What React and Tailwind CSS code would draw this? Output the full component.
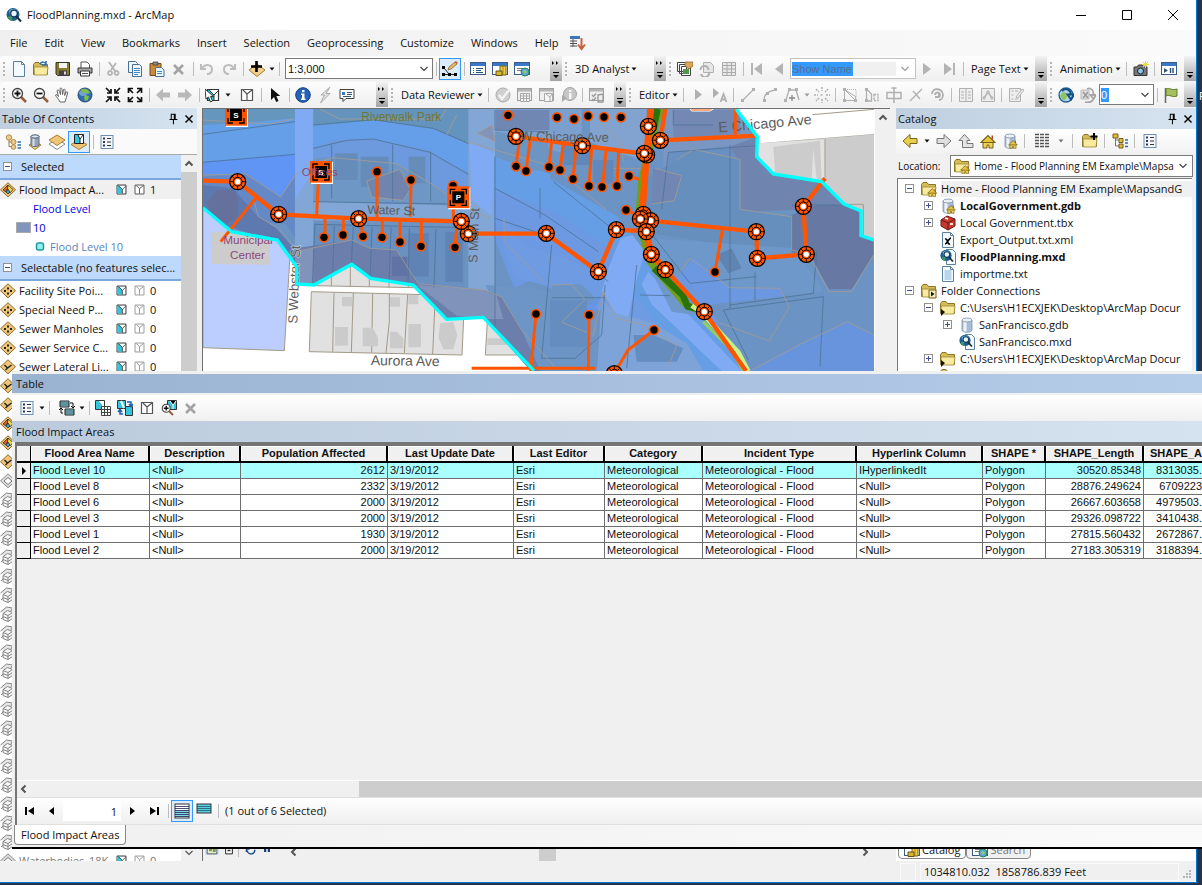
import React from 'react';
import clsx from 'clsx';

const FLOOD_ROWS = [
    { name: 'Flood Level 10', desc: '<Null>', pop: '2612', link: 'IHyperlinkedIt', length: '30520.85348', area: '8313035.', selected: true },
    { name: 'Flood Level 8', desc: '<Null>', pop: '2332', link: '<Null>', length: '28876.249624', area: '6709223' },
    { name: 'Flood Level 6', desc: '<Null>', pop: '2000', link: '<Null>', length: '26667.603658', area: '4979503.' },
    { name: 'Flood Level 3', desc: '<Null>', pop: '2000', link: '<Null>', length: '29326.098722', area: '3410438.' },
    { name: 'Flood Level 1', desc: '<Null>', pop: '1930', link: '<Null>', length: '27815.560432', area: '2672867.' },
    { name: 'Flood Level 2', desc: '<Null>', pop: '2000', link: '<Null>', length: '27183.305319', area: '3188394.' },
];

const LAYERS = [
    { icon: 'points', name: 'Facility Site Poi...' },
    { icon: 'points', name: 'Special Need P...' },
    { icon: 'points', name: 'Sewer Manholes' },
    { icon: 'points', name: 'Sewer Service C...' },
    { icon: 'lines', name: 'Sewer Lateral Li...' },
    { icon: 'lines' }, { icon: 'lines' }, { icon: 'polys' }, { icon: 'polys' }, { icon: 'lines' }, { icon: 'greyDiamond' },
    ...Array.from({ length: 19 }, () => ({ icon: 'greyStack' })),
    { icon: 'greyDiamond', name: 'Waterbodies_18K', dim: true },
];

const TREE = [
    { depth: 0, toggle: '-', icon: 'folderHome', name: 'Home - Flood Planning EM Example\\MapsandG', active: true },
    { depth: 1, toggle: '+', icon: 'gdbHome', name: 'LocalGovernment.gdb', bold: true },
    { depth: 1, toggle: '+', icon: 'toolbox', name: 'Local Government.tbx' },
    { depth: 1, icon: 'xml', name: 'Export_Output.txt.xml' },
    { depth: 1, icon: 'mxd', name: 'FloodPlanning.mxd', bold: true },
    { depth: 1, icon: 'txt', name: 'importme.txt' },
    { depth: 0, toggle: '-', icon: 'folderConn', name: 'Folder Connections' },
    { depth: 1, toggle: '-', icon: 'folderLink', name: 'C:\\Users\\H1ECXJEK\\Desktop\\ArcMap Docur' },
    { depth: 2, toggle: '+', icon: 'gdb', name: 'SanFrancisco.gdb' },
    { depth: 2, icon: 'mxd', name: 'SanFrancisco.mxd' },
    { depth: 1, toggle: '+', icon: 'folderLink', name: 'C:\\Users\\H1ECXJEK\\Desktop\\ArcMap Docur' },
    { depth: 1, toggle: '+', icon: 'folderLink', name: '' },
];

const INDENT = ['pl-[7px]', 'pl-[26px]', 'pl-[45px]'];

/* ---------- icon parts ---------- */

const page = (
    <>
        <path d="M2.500 .5h8l3 3v12h-11z" fill="#f4f9fd" stroke="#5d7f9e" />
        <path d="M10.500 .5v3h3" fill="none" stroke="#5d7f9e" />
    </>
);
const folder = (
    <>
        <path d="M.5 3.500l1.500-2h4l1.500 2h7v10h-14z" fill="#d6bc56" stroke="#8a7528" />
        <path d="M1 6h14l-1 8h-12.500z" fill="#f8ea9e" stroke="#9c8636" strokeWidth=".8" />
    </>
);
const house = (
    <>
        <path d="M3 9v6h4v-3h2v3h4v-6" fill="#f0d354" stroke="#75601a" />
        <path d="M1 9.500l7-7 7 7z" fill="#e8c63c" stroke="#75601a" strokeWidth="1.200" />
        <path d="M11.500 2.500h1.500v4h-1.500z" fill="#b5452e" />
    </>
);
const cylinder = (
    <>
        <path d="M3 3v10c0 3 10 3 10 0v-10z" fill="#a9bdd4" />
        <path d="M4.500 4v10.500c1 .6 2 .7 3 .7v-11z" fill="#eef3f9" />
        <ellipse cx="8" cy="3" rx="5" ry="2" fill="#eaf0f6" stroke="#7d90a6" strokeWidth=".8" />
        <path d="M3 3v10c0 3 10 3 10 0v-10" fill="none" stroke="#7d90a6" strokeWidth=".8" />
    </>
);
const globe = (
    <>
        <circle cx="8" cy="8" r="7" fill="#2f6db0" />
        <circle cx="6" cy="5" r="4" fill="#9cc8ec" opacity=".6" />
        <path d="M5 2c4-1 7 1 8 4l-3 1-2-2-3 1zM8 8l4 1-1 4-3 1-1-3z" fill="#7fbf4a" />
        <circle cx="8" cy="8" r="7" fill="none" stroke="#274c7a" />
    </>
);
const winFrame = (
    <>
        <rect x=".5" y="1.500" width="15" height="12" fill="#fff" stroke="#3b5a86" />
        <path d="M1 2h14v3h-14z" fill="#3b78c8" />
    </>
);
const greyWin = (
    <>
        <rect x=".5" y="1.500" width="14" height="12" fill="#eee" stroke="#a0a0a0" />
        <path d="M1 2h13v2.500h-13z" fill="#b4b4b4" />
    </>
);
const lens = (
    <>
        <path d="M10 10l5 5" stroke="#9a5a3c" strokeWidth="2.500" />
        <circle cx="6.500" cy="6.500" r="5" fill="#fff" stroke="#444" strokeWidth="1.300" />
    </>
);
const mapSheet = <path d="M2.500 2.500h11v11h-11zM4 3l4 4v6M8 7l5-4" fill="#fff" stroke="#555" strokeWidth="1.200" />;
const cyanSheet = (
    <>
        <path d="M2.500 2.500h11v11h-11z" fill="#fff" stroke="#333" strokeWidth="1.200" />
        <path d="M3 3h2l4 5v5h-6z" fill="#34c4dc" />
        <path d="M4 3l5 5v5M9 8l4-4" fill="none" stroke="#333" />
    </>
);
const arcGlobe = (
    <>
        <circle cx="7" cy="7.500" r="6.500" fill="#1d5d8f" />
        <path d="M3 4c3-3 7-2 9 0l-2 4-5 3z" fill="#6fb6d8" />
        <path d="M2 9l3 1 2 4c-3 0-5-2-5-5z" fill="#3f9a54" />
        <circle cx="8" cy="6.500" r="3.300" fill="#e8f3f8" stroke="#12395a" strokeWidth="1.300" />
        <path d="M10.500 9.500l4.500 5" stroke="#1d2f40" strokeWidth="2" />
    </>
);
const list = (
    <>
        <rect x="2" y="1.500" width="12" height="13" fill="#f4f8fc" stroke="#6f8fb0" />
        <path d="M8 4.500h4M8 8h4M8 11.500h4" stroke="#333" />
        <g fill="#335"><path d="M4 3.500h2v2h-2zM4 7h2v2h-2zM4 10.500h2v2h-2z" /></g>
    </>
);
const diamond = <path d="M8 .8l7.500 7-7.500 7-7.500-7z" fill="#efc678" stroke="#8f6a2a" />;
const arrowR = 'M1 5.500h7v-4l7 6.500-7 6.500v-4h-7z';

const ICONS = {
    arcmap: arcGlobe,
    newDoc: page,
    open: <>{folder}<path d="M7 3c2-3 5-2 6 0M13 0v4h-4" fill="none" stroke="#2e6eb5" strokeWidth="1.500" /></>,
    save: (
        <>
            <path d="M1 1.500h13.500v13h-12l-1.500-1.500z" fill="#8a7a2e" stroke="#333" />
            <path d="M4 2h8v5h-8z" fill="#f3f3f3" /><path d="M4 9.500h8v5h-8z" fill="#444" /><path d="M9 10.500h2v3h-2z" fill="#ddd" />
        </>
    ),
    print: (
        <>
            <path d="M4 7v-6h6l2.500 2.500v3.500" fill="#fff" stroke="#555" />
            <path d="M1 7h14v5h-14z" fill="#a8a8a8" stroke="#333" /><path d="M3.500 10h9v5h-9z" fill="#fff" stroke="#333" /><path d="M5 12.500h6" stroke="#555" />
        </>
    ),
    cut: <path d="M4 1l6 9M11 2l-5 7M5 10a2 2 0 1 0 .1 0M11.500 10a2 2 0 1 0 .1 0" fill="none" stroke="#b5b5b5" strokeWidth="1.800" />,
    copy: (
        <g fill="#eef5fb" stroke="#4a6f94">
            <path d="M1.500 .5h7l2 2v9h-9z" /><path d="M5.500 3.500h7l2 2v10h-9z" /><path d="M7 7.500h6M7 9.500h6M7 11.500h6M7 13.500h4" stroke="#3b8bd0" />
        </g>
    ),
    paste: (
        <>
            <path d="M1 2.500h11v12h-11z" fill="#c98b3a" stroke="#6e4a1c" /><path d="M4 1h5v3h-5z" fill="#888" stroke="#444" strokeWidth=".8" />
            <path d="M6.500 6.500h6l2.500 2.500v6.500h-8.500z" fill="#eef5fb" stroke="#4a6f94" /><path d="M8 10.500h5M8 12.500h5" stroke="#3b8bd0" />
        </>
    ),
    del: <path d="M3 4l9 9M12 4l-9 9" stroke="#a3a3a3" strokeWidth="2.600" />,
    undo: <path d="M2 3v5h5M3 7c4-5 10-3 10 1 0 3-2 5-5 5" fill="none" stroke="#bdbdbd" strokeWidth="2" />,
    redo: <path d="M14 3v5h-5M13 7c-4-5-10-3-10 1 0 3 2 5 5 5" fill="none" stroke="#bdbdbd" strokeWidth="2" />,
    addData: (
        <>
            <path d="M8 3l8 6-8 6.500-8-6.500z" fill="#f0cf8c" stroke="#a87d2f" /><path d="M7.500 0v11M2 5.500h11" stroke="#000" strokeWidth="2.600" />
        </>
    ),
    sketch: (
        <>
            <path d="M2 13.500h12M2 7l5 6" stroke="#222" /><path d="M0 12h3v3h-3zM6 12h3v3h-3zM12 12h3v3h-3zM0 5h3v3h-3z" fill="#000" />
            <path d="M6 9l1-3 6-5 2 2-6 5z" fill="#e8b862" stroke="#7d5a20" strokeWidth=".7" /><path d="M12.500 1l1.500-1 2 2-1.500 1z" fill="#d0524a" />
        </>
    ),
    tocWin: <>{winFrame}<path d="M3 7.500h1M3 9.500h1M3 11.500h1" stroke="#d23" /><path d="M6 7.500h7M6 9.500h5M6 11.500h7" stroke="#257" /></>,
    catWin: <>{winFrame}<path d="M8 5h6v9h-6z" fill="#f0d040" stroke="#75601a" /><path d="M11 5v9" stroke="#a08424" /><path d="M4 10h6v4.500h-6z" fill="#d8b52c" stroke="#65521a" /></>,
    searchWin: <>{winFrame}<path d="M3 7.500h8M3 9.500h4" stroke="#777" /><circle cx="11" cy="11" r="4" fill="#5fa3d9" stroke="#285" /><path d="M9 10l2-1 2 2-2 2z" fill="#8fd060" /></>,
    menuArrow: (
        <>
            <path d="M0 1h10v3h-10z" fill="#3b78b8" /><path d="M0 6h7M0 8.500h7M0 11h7M3 4v8" stroke="#555" /><path d="M11.500 3v10M8 9.500l3.500 4.500 3.500-4.500" fill="none" stroke="#c8623c" strokeWidth="2" />
        </>
    ),
    ddp: (
        <>
            <path d="M.5 1.500h9v9h-9zM2.500 3.500h9v9h-9zM4.500 5.500h9v9h-9z" fill="#fff" stroke="#444" /><path d="M6 8h6v5h-6z" fill="#4f9a4a" /><path d="M8 1h8v4l-4 3-4-3z" fill="#d9a65a" stroke="#8a5a20" strokeWidth=".7" />
        </>
    ),
    ddpRefresh: (
        <g fill="#e6e6e6" stroke="#b0b0b0"><path d="M4.500 1.500h7l3 3v7h-10z" /><path d="M1.500 9a4 4 0 0 1 8 0M10 11a4 4 0 0 1-8 2" fill="none" strokeWidth="2" /></g>
    ),
    greyTable: <g fill="#e9e9e9" stroke="#aaa"><path d="M1.500 1.500h13v13h-13z" /><path d="M1.500 4.500h13M1.500 8h13M1.500 11.500h13M6 1.500v13M10.500 1.500v13" /></g>,
    first: <path d="M2 2h2v12h-2zM13 2v12l-8-6z" fill="#b4b4b4" />,
    prev: <path d="M12 2v12l-8-6z" fill="#b4b4b4" />,
    next: <path d="M4 2v12l8-6z" fill="#b4b4b4" />,
    last: <path d="M12 2h2v12h-2zM3 2v12l8-6z" fill="#b4b4b4" />,
    camera: (
        <>
            <path d="M1 6h3l1.500-2h4l1.500 2h3v8.500h-13z" fill="#777" stroke="#333" /><circle cx="7.500" cy="10" r="3" fill="#8fc4ea" stroke="#222" />
            <path d="M12.500 0v7M9 3.500h7M10 1l5 5M15 1l-5 5" stroke="#e9d94b" />
        </>
    ),
    animWin: <>{winFrame}<path d="M3 7l4 2.500-4 2.500z" fill="#357" /><path d="M9.500 7v5M12 7v5" stroke="#357" strokeWidth="1.500" /></>,
    zoomIn: <>{lens}<path d="M6.500 3.500v6M3.500 6.500h6" stroke="#111" strokeWidth="1.800" /></>,
    zoomOut: <>{lens}<path d="M3.500 6.500h6" stroke="#111" strokeWidth="1.800" /></>,
    pan: <path d="M5 15c-1-3-4-5-4.500-7 1-1 2 0 3 1.500l-1.500-6c1-1 2 0 2.500 1l1 3-.5-6c1-1 2 0 2 1l.6 5 .9-5c1-.8 1.800 0 1.700 1l-.5 5 1.600-3.500c1-.5 1.600.2 1.300 1-1 3-1.500 6-2.600 9z" fill="#fff" stroke="#555" strokeWidth=".9" />,
    globe,
    fixedIn: <path d="M1 1l5 5M6 2v4h-4M15 1l-5 5M10 2v4h4M1 15l5-5M6 14v-4h-4M15 15l-5-5M10 14v-4h4" fill="none" stroke="#111" strokeWidth="1.700" />,
    fixedOut: <path d="M2 2l4 4M1.500 6v-4.500h4.500M14 2l-4 4M14.500 6v-4.500h-4.500M2 14l4-4M1.500 10v4.500h4.500M14 14l-4-4M14.500 10v4.500h-4.500" fill="none" stroke="#111" strokeWidth="1.700" />,
    backGrey: <path d={arrowR} fill="#b9b9b9" transform="matrix(-1 0 0 1 16 0)" />,
    fwdGrey: <path d={arrowR} fill="#b9b9b9" />,
    selectFeat: <>{cyanSheet}<path d="M0 2l1 10 2.500-2 2 5 2-1-2-4.500h3z" fill="#fff" stroke="#222" strokeWidth=".9" /></>,
    clearSel: mapSheet,
    pointer: <path d="M4 1v12l3-3 2.200 5 2.300-1-2.200-5h4z" fill="#111" />,
    info: (
        <>
            <circle cx="8" cy="8" r="7.300" fill="#2563b8" stroke="#173f7c" /><path d="M7 3h2.500v2.200h-2.500zM6 6.500h3.500v5h1v1.500h-4.500v-1.500h1v-3.500h-1z" fill="#fff" />
        </>
    ),
    bolt: <path d="M13 0l-9 8h3.500l-4 8 9.500-9.500h-4z" fill="#e2e2e2" stroke="#aaa" />,
    popup: (
        <>
            <path d="M1 2.500h14v9h-8l-3 3v-3h-3z" fill="#fff" stroke="#444" /><path d="M3 5h3v3h-3z" fill="#3b78c8" /><path d="M8 5.500h5M8 7.500h5M4 9.500h8" stroke="#357" />
        </>
    ),
    checkDisc: <><circle cx="8" cy="8" r="7" fill="#cfcfcf" stroke="#aaa" /><path d="M4 8l3 4 7-9" fill="none" stroke="#f4f4f4" strokeWidth="2.200" /></>,
    winTable: <>{greyWin}<path d="M3.500 6.500h9v8h-9zM3.500 9h9M3.500 11.500h9M6.500 6.500v8M9.500 6.500v8" fill="#f5f5f5" stroke="#aaa" /></>,
    winSel: <>{greyWin}<path d="M5.500 6.500h8v8h-8zM7 7l4 3v4M11 10l2-3" fill="#f5f5f5" stroke="#aaa" /></>,
    infoDisc: <><circle cx="9" cy="7" r="6.500" fill="#c6c6c6" stroke="#a5a5a5" /><path d="M8 3h2.500v2h-2.500zM8 6h2.500v6h-2.500z" fill="#f5f5f5" /><path d="M1 8l5 3-5 4z" fill="#aaa" /></>,
    winCheck: <>{greyWin}<path d="M3 8l1.500 1.500 2.500-3M3 12l1.500 1.500 2.500-3M9 8l5-1v8h-5z" fill="none" stroke="#999" strokeWidth="1.300" /></>,
    editArrow: <path d="M5 2v11l7-5.500z" fill="#b0b0b0" />,
    editNote: <><path d="M1 1v10l6-5z" fill="#b0b0b0" /><path d="M8.500 15l3-8 3 8M9.500 12.500h4" fill="none" stroke="#b0b0b0" strokeWidth="1.800" /></>,
    seg: <><path d="M3 13l10-10" stroke="#b0b0b0" strokeWidth="1.300" /><path d="M1 12h3v3h-3zM12 1h3v3h-3z" fill="#b0b0b0" /></>,
    arc: <><path d="M2 13c0-6 5-9 11-10" fill="none" stroke="#b0b0b0" strokeWidth="1.300" /><path d="M1 12h3v3h-3zM12 1h3v3h-3zM4 5h3v3h-3z" fill="#b0b0b0" /></>,
    trace: <><path d="M2 13l3-10h7l3 10" fill="none" stroke="#b0b0b0" strokeWidth="1.300" /><path d="M4 1h3v3h-3zM11 1h3v3h-3zM0 12h3v3h-3z" fill="#b0b0b0" /><path d="M8 8v6M5 11h6" stroke="#888" strokeWidth="1.300" /></>,
    burst: <path d="M8 0v4M8 12v4M0 8h4M12 8h4M2 2l3 3M11 11l3 3M14 2l-3 3M5 11l-3 3M6.500 8h3" stroke="#b0b0b0" strokeWidth="1.500" strokeDasharray="2 1" />,
    vertices: <><path d="M2.500 2.500v11h11zM2.500 2.500l11 7v4" fill="none" stroke="#b0b0b0" /><path d="M1 1h3v3h-3zM1 12h3v3h-3zM12 12h3v3h-3z" fill="#b0b0b0" /><path d="M5 2.500h9v8" fill="none" stroke="#b0b0b0" strokeDasharray="1 1" /></>,
    reshape: <><path d="M2.500 1v14M2.500 2l5 5v7h-5" fill="none" stroke="#b0b0b0" strokeWidth="1.300" /><path d="M1 1h3v3h-3zM1 12h3v3h-3z" fill="#b0b0b0" /><path d="M10 7.500h4v6h-4z" fill="none" stroke="#b0b0b0" strokeWidth="1.500" strokeDasharray="2 1" /></>,
    cutPoly: <path d="M1 5.500h14v6h-14zM8 1v15M5.500 1h5" fill="none" stroke="#b0b0b0" strokeWidth="1.500" />,
    split: <path d="M2 14l12-12M5 4l7 8" stroke="#b0b0b0" strokeWidth="1.300" />,
    rotate: <path d="M2 7c0-7 11-6 11 1 0 3-2 5-4 5M5 8a2.500 2.500 0 1 1 4 2M9 5v5h-4" fill="none" stroke="#b0b0b0" strokeWidth="1.800" />,
    attrs: <g fill="#eee" stroke="#b0b0b0"><path d="M1.500 1.500h13v13h-13zM8 1.500v13M3 5h3M3 8h3M3 11h3M10 5h3M10 8h3M10 11h3" /></g>,
    sketchProps: <g fill="#eee" stroke="#b0b0b0"><path d="M1.500 1.500h13v13h-13z" /><path d="M4 11l4-6 4 6" strokeWidth="1.500" /><path d="M3 10h2v2h-2zM7 4h2v2h-2zM11 10h2v2h-2z" /></g>,
    createFeat: <g fill="#eee" stroke="#b0b0b0"><path d="M1.500 1.500h11v13h-11zM3.500 4h2M3.500 8h2M3.500 12h2M7 4h3M7 12h3" /><path d="M8 10l6-8 2 1-6 8z" /></g>,
    globeSync: <><circle cx="8" cy="8" r="7" fill="#a9d3ee" stroke="#1f5f90" strokeWidth="1.300" /><path d="M2 9l3-4 3 1 1 4-3 4z" fill="#8fc45a" /><path d="M4 4c4-4 9-1 9 4M9.500 7.500l3.500 5 3-5z" fill="none" stroke="#174f80" strokeWidth="2" /></>,
    globeSyncGrey: <><path d="M1 3h8v9h-8z" fill="#ddd" stroke="#bbb" /><path d="M3 5l5 6M8 5l-5 6" stroke="#999" strokeWidth="1.500" /><path d="M7 2c4-2 7 2 6.500 6M10.500 8l3 4 2.500-4zM5 15c3 1 6 0 8-2" fill="none" stroke="#a5a5a5" strokeWidth="1.800" /></>,
    flag: <><path d="M2.500 1v15" stroke="#666" strokeWidth="1.500" /><path d="M3 2c4-2 5 2 11 0v7c-5 2-7-2-11 0z" fill="#a4c060" stroke="#5f7a2c" /></>,
    drawOrder: (
        <>
            <path d="M4 4v8.500h4M4 8h4" fill="none" stroke="#9a7a40" /><circle cx="4" cy="3.500" r="2.700" fill="#eecb8c" stroke="#b58b45" /><circle cx="8.500" cy="8" r="2.500" fill="#eecb8c" stroke="#b58b45" />
            <circle cx="8.500" cy="13" r="2.300" fill="#eecb8c" stroke="#b58b45" /><path d="M12.500 8h3.500M12.500 11h3.500M12.500 14h3.500" stroke="#2b6fb8" strokeWidth="1.300" />
        </>
    ),
    bySource: <><path d="M2 11l6-3 6 3-6 4.500z" fill="#f0cf8c" stroke="#a87d2f" /><path d="M4 2v9c0 2 8 2 8 0v-9z" fill="#94a4b8" stroke="#5a6a80" /><path d="M5.500 3.500v8.500h2v-8z" fill="#d5dde6" /><ellipse cx="8" cy="2.500" rx="4" ry="1.700" fill="#dfe6ee" stroke="#4a5a70" /></>,
    byVisible: <><path d="M8 5l8 5-8 5.500-8-5.500z" fill="#fff" stroke="#888" /><path d="M8 1l8 5-8 5.500-8-5.500z" fill="#efc678" stroke="#a87d2f" /></>,
    bySelection: <><path d="M8 6l8 4.500-8 5-8-5z" fill="#efc678" stroke="#a87d2f" /><path d="M3.500 .5h9v9h-9z" fill="#fff" stroke="#222" /><path d="M4 1h3l2 4v4h-5z" fill="#34c4dc" /><path d="M7 1l2 4v4M9 5l3-4" stroke="#222" fill="none" /></>,
    list,
    points: <>{diamond}<path d="M4 7h2v2h-2zM7 4.500h2v2h-2zM10 7h2v2h-2zM7 9.500h2v2h-2z" fill="#222" /></>,
    lines: <>{diamond}<path d="M4.500 6l3 3 4-3M7.500 9l-2 2" fill="none" stroke="#222" strokeWidth="1.400" /></>,
    polys: <>{diamond}<path d="M8 3l5 4.500-3 3.500-3-4z" fill="#f6d23c" stroke="#222" strokeWidth=".7" /><path d="M8 3l-5 5 3 2 1.500-3.500z" fill="#e0602c" stroke="#222" strokeWidth=".7" /><path d="M6 10l2 2 2-2-2-3z" fill="#3b9ad0" stroke="#222" strokeWidth=".7" /></>,
    greyDiamond: <><path d="M8 .8l7.500 7-7.500 7-7.500-7z" fill="#dcdcdc" stroke="#8a8a8a" /><path d="M4 8l4-3.500 4 3.500-4 3.500z" fill="#fff" stroke="#777" /></>,
    greyStack: (
        <g fill="#f6f6f6" stroke="#858585">
            <path d="M.5 6l6-5 6 1-2 4" fill="#e6e6e6" /><path d="M3 7.500l4.500-3 5 2v6l-4.500 3-5-2z" /><path d="M3 7.500l5 2 4.500-3M8 9.500v6M3 10.500l5 2 4.500-3" fill="none" /><path d="M1 13l2-2" fill="none" />
        </g>
    ),
    selOn: cyanSheet,
    selOff: mapSheet,
    selOffGrey: <path d="M2.500 2.500h11v11h-11zM4 3l4 4v6M8 7l5-4" fill="#fff" stroke="#999" strokeWidth="1.200" />,
    cyanCell: <rect x="4.500" y="4" width="7" height="7" rx="2" fill="#8ff0ee" stroke="#1f9aa0" strokeWidth="1.500" />,
    backGold: <path d={arrowR} fill="#e6cf4d" stroke="#75651c" transform="matrix(-1 0 0 1 16 0)" />,
    fwdPlain: <path d={arrowR} fill="#dedede" stroke="#777" />,
    upLevel: <path d="M4.500 12.500v-5h-3.500l5.500-6 5.500 6h-3v3h6v4h-10.500z" fill="#e4e4e4" stroke="#777" />,
    home: house,
    gdbHome: <>{cylinder}<g transform="translate(6 6) scale(.62)">{house}</g></>,
    gdb: cylinder,
    gridView: <path d="M1 1.500h14M1 4.500h14M1 7.500h14M1 10.500h14M1 13.500h14" stroke="#555" strokeWidth="1.400" strokeDasharray="4 1" />,
    folderAdd: <>{folder}<path d="M12 0v7M8.500 3.500h7" stroke="#000" strokeWidth="2" /></>,
    treeView: <><path d="M3.500 4v9h5M3.500 7h5" fill="none" stroke="#777" /><path d="M1 1h5v4h-5zM7 5.500h4v4h-4zM7 11h4v4h-4z" fill="#e2bd3c" stroke="#75601a" /><path d="M13 7h3M13 10h3M13 13.500h3" stroke="#2b6fb8" strokeWidth="1.400" /></>,
    folderHome: <>{folder}<g transform="translate(6 6) scale(.65)">{house}</g></>,
    folderConn: <>{folder}<path d="M8 7h7v8h-7z" fill="#f7efc0" stroke="#75601a" /><path d="M10 8.500l3.500 2.500-3.500 2.500z" fill="#111" /></>,
    folderLink: <>{folder}<path d="M1 9l4 3-4 4z" fill="#111" /></>,
    toolbox: <><path d="M1 5l6-4 8 3v7l-7 4-7-4z" fill="#c63a30" stroke="#6d1712" /><path d="M1 5l7 3 7-4M8 8v7" stroke="#6d1712" fill="none" /><path d="M5 3l3 1" stroke="#fff" strokeWidth="1.500" /><path d="M10 8h3v2h-3z" fill="#f1d9d6" /></>,
    xml: <>{page}<path d="M5 7c3-1 2 6 5 5M11 6c-2 0-4 6-6 6" fill="none" stroke="#000" strokeWidth="1.500" /></>,
    mxd: <><path d="M6.500 .5h6l3 3v12h-9z" fill="#f4f9fd" stroke="#5d7f9e" /><g transform="scale(.86)">{arcGlobe}</g></>,
    txt: <>{page}<path d="M4.500 5h7M4.500 7h7M4.500 9h7M4.500 11h7M4.500 13h7" stroke="#7fb2dc" /></>,
    related: <><path d="M1 1h9v6h-9zM6 9h9v6h-9z" fill="#7fd0de" stroke="#222" /><path d="M1 3h9M1 5h9M6 11h9M6 13h9" stroke="#222" strokeWidth=".7" /><path d="M11 3h3v4M12 6l2 2 2-2M4 13h-2v-4M0 10l2-2 2 2" fill="none" stroke="#111" /></>,
    selAttr: <><path d="M.5 .5h9v9h-9z" fill="#fff" stroke="#333" /><path d="M1 1h3l3 4v4h-6z" fill="#34c4dc" /><path d="M6.500 6.500h9v9h-9zM6.500 9.500h9M6.500 12.500h9M9.500 6.500v9M12.500 6.500v9" fill="#fff" stroke="#444" /></>,
    switchSel: <><path d="M.5 .5h8v8h-8zM8.500 6.500h7v9h-7z" fill="#34c4dc" stroke="#333" /><path d="M4 1l3 7" stroke="#fff" strokeWidth="2" /><path d="M10 2h4v4M12 4l2 2.500 2-2.500M6 14h-3v-4M1 12l2-2.500 2 2.500" fill="none" stroke="#1f5fa8" strokeWidth="1.500" /></>,
    zoomSel: <><path d="M6.500 .5h9v9h-9z" fill="#34c4dc" stroke="#333" /><path d="M9 1l3 4 3-4M12 5v4" stroke="#fff" /><g transform="translate(0 3) scale(.8)">{lens}<path d="M6.500 3.500v6M3.500 6.500h6" stroke="#111" strokeWidth="1.800" /></g></>,
    allRecords: <><rect x="1" y="1" width="14" height="14" fill="#fff" stroke="#333" /><path d="M2 7h12v7h-12z" fill="#7fdbe6" /><path d="M1 3.500h14M1 5.500h14M1 7.500h14M1 9.500h14M1 11.500h14M1 13.500h14" stroke="#225" strokeWidth=".8" /></>,
    selRecords: <><rect x="1" y="1" width="14" height="9" fill="#5ad0e0" stroke="#333" /><path d="M1 3.500h14M1 5.500h14M1 7.500h14" stroke="#256" strokeWidth=".8" /></>,
    navFirst: <path d="M3 4h2v8h-2zM12 4v8l-6-4z" fill="#000" />,
    navPrev: <path d="M10 4v8l-5-4z" fill="#000" />,
    navNext: <path d="M6 4v8l5-4z" fill="#000" />,
    navLast: <path d="M11 4h2v8h-2zM4 4v8l6-4z" fill="#000" />,
    pin: <path d="M6 2.500h4.500v6h-4.500zM4 8.500h9M8.500 9v5M9.500 3v5" fill="none" stroke="#000" strokeWidth="1.200" />,
    close: <path d="M4 4l8 8M12 4l-8 8" stroke="#000" strokeWidth="1.700" />,
    dataView: <><path d="M1.500 1.500h13v13h-13z" fill="#e8eecb" stroke="#333" /><path d="M4 5h4v6h-4zM9 8h4v4h-4z" fill="#7a9a5a" /></>,
    layoutView: <><path d="M3.500 1.500h9v13h-9z" fill="#fff" stroke="#222" strokeWidth="1.300" /><path d="M6 9h4v2h-4z" fill="#333" /></>,
    refresh: <path d="M3 7a5 5 0 0 1 10 0M13 9a5 5 0 0 1-10 1M2 12v-4h4" fill="none" stroke="#1f4a8a" strokeWidth="2" />,
    pause: <path d="M4 3h3v9h-3zM9 3h3v9h-3z" fill="#1f3f7a" />,
};

const Icon = ({ name, className = 'size-4' }) => (
    <svg viewBox="0 0 16 16" className={clsx('block shrink-0', className)} aria-hidden="true">{ICONS[name]}</svg>
);

/* ---------- toolbar pieces ---------- */

const Tool = ({ icon, on }) => (
    <button type="button" aria-label={icon} className={clsx('flex h-[22px] w-[22px] shrink-0 items-center justify-center', on && 'border border-[#3399ff] bg-[#dcebfa]')}>
        <Icon name={icon} />
    </button>
);
const Sep = () => <div className="flex w-1.5 shrink-0 justify-center"><div className="h-3.5 w-px bg-[#bdbdbd]" /></div>;
const Drop = ({ className }) => (
    <svg viewBox="0 0 8 8" className={clsx('block size-2 shrink-0', className)}><path d="M1.500 2.500h5l-2.500 3z" fill="currentColor" /></svg>
);
const Grip = () => <div className="ml-[3px] mr-[3px] h-3.5 w-0.5 shrink-0 border-l-2 border-dotted border-[#b5b5b5]" />;
const More = ({ full = true }) => (
    <div className="ml-auto flex h-full w-3 shrink-0 flex-col items-center justify-between bg-gradient-to-b from-[#f4f4f4] to-[#a4a4a4] pt-1 pb-0.5">
        <svg viewBox="0 0 8 6" className="h-1.5 w-2">{full && <path d="M0 1l2 2-2 2zM4 1l2 2-2 2z" fill="#000" />}</svg>
        <svg viewBox="0 0 8 8" className="size-2"><path d="M1 1h6v1h-6zM1 4h6l-3 3z" fill="#000" /></svg>
    </div>
);
const Bar = ({ className, children }) => (
    <div role="toolbar" className={clsx('flex h-[25px] shrink-0 items-center rounded-sm bg-gradient-to-b from-[#fdfdfd] to-[#efefef]', className)}>{children}</div>
);
const MenuButton = ({ children }) => (
    <button type="button" className="flex shrink-0 items-center gap-px whitespace-nowrap pl-[5px] pr-0.5">{children}<Drop /></button>
);
const CHEVRONS = {
    down: 'M1.500 3l3.500 3.500 3.500-3.500',
    up: 'M1.500 6.500l3.500-3.500 3.500 3.500',
    left: 'M6.500 1.500l-3.500 3.500 3.500 3.500',
    right: 'M3.500 1.500l3.500 3.500-3.500 3.500',
};
const Chevron = ({ dir = 'down', className = 'text-[#555]' }) => (
    <svg viewBox="0 0 10 10" className={clsx('block size-2.5 shrink-0', className)}><path d={CHEVRONS[dir]} fill="none" stroke="currentColor" strokeWidth={dir === 'down' ? 1.2 : 2} /></svg>
);

/* ---------- map ---------- */

const MANHOLES = [
    [113, 230], [236, 328], [476, 341], [805, 386], [784, 349], [948, 94], [1039, 385],
    [1345, 64], [1381, 106], [1340, 150], [1333, 145], [1147, 122], [1195, 500], [1249, 374], [1330, 328], [1352, 347], [1321, 342], [1339, 380],
    [1354, 448], [1396, 494], [1513, 620], [1669, 380], [1672, 460], [1819, 448], [1810, 304], [1243, 806],
];
const DOTS = [
    [531, 200], [633, 225], [759, 242], [372, 397], [429, 390], [489, 394], [546, 397], [600, 411], [663, 424], [765, 427], [924, 31], [948, 184], [978, 198], [1008, 627],
    [1071, 37], [1122, 42], [1164, 33], [1212, 36], [1263, 37], [1047, 186], [1080, 195], [1119, 222], [1167, 243], [1206, 246], [1251, 243], [1287, 213], [1278, 315], [1545, 501], [1167, 630], [1362, 675],
];

const Facility = ({ x, y, letter }) => (
    <g transform={`translate(${x} ${y})`}>
        <path d="M-30 -30h66v66h-66z" fill="#fff" />
        <path d="M-33 -33h66v65h-66z" fill="#ff5500" />
        <path d="M-24 -9v-15h15M24 -9v-15h-15M-24 9v15h15M24 9v15h-15" fill="none" stroke="#000" strokeWidth="4" />
        <path d="M-18 -18h36v36h-36z" fill="#000" />
        <text y="8" textAnchor="middle" fontSize="24" fontWeight="700" fill="#fff">{letter}</text>
    </g>
);

// map units are thirds of a pixel
const FloodMap = () => (
    <svg viewBox="9 12 2013 786" className="block h-[262px] w-[671px] shrink-0" fontFamily="Liberation Sans, Arial, sans-serif" role="img" aria-label="Flood map">
        <path d="M9 12h2013v786h-2013z" fill="#fff" />

        {/* dry parcels under the flood layer */}
        <path d="M9 300h270l-26 437-244-9z" fill="#bccdff" stroke="#a29a88" strokeWidth="3" />
        <path d="M34 380h176v100l-176 -3z" fill="#cccccc" />
        <g fill="#e1e1e1" stroke="#a29a88" strokeWidth="3">
            <path d="M334 560l460 12-8 178-458-10z" /><path d="M402 562l-4 178M460 564l-6 178M518 565l-3 178M568 566v84l-10 94M623 568l-10 176M706 569l-8 178" />
            <path d="M342 540l100-60 400 60v12l-500-10z" /><path d="M394 515v28M451 480v64M508 520v26M567 530v17M625 540v8" /><path d="M862 650l-6 100h150v-100z" />
        </g>
        <g fill="#cbcbcb"><path d="M426 576h30v28h-30zM570 577h30v28h-30zM625 570h30v28h-30zM405 666h39v56h-39zM488 668h30l16 30v26h-46zM570 680h20l20 20v30h-40zM625 657h38v70h-38zM720 655l40-4 12 40-12 42h-30l-14-34zM862 700h90v20h-90z" /></g>
        <path d="M1670 115l370-30v400h-60l-130-270-180-10z" fill="#cccccc" stroke="#a29a88" strokeWidth="3" />
        <path d="M1670 115l205-12 2 132-190-30z" fill="#e1e1e1" /><path d="M1720 125l140-18 5 118-15-4-10-90-5 94-110-20z" fill="#cccccc" /><path d="M1875 103v120" stroke="#a29a88" strokeWidth="3" />
        <path d="M1600 12h240l-3 18 200-20v76l-367 29-60-60z" fill="#fff" /><path d="M1837 29l185-16" stroke="#a29a88" strokeWidth="3" />
        <path d="M1930 298h60v110" fill="none" stroke="#a29a88" strokeWidth="3" />

        {/* flooded area */}
        <clipPath id="flood"><path d="M9 12H1610L1672 95l-2 60 50 52 145 23 67 67 51 21v74l42 14v400H1000L850 637l-110 6L640 540 512 520l-57-42-113 62-52-3v-52L232 405 95 380 9 310z" /></clipPath>
        <g clipPath="url(#flood)">
            <path d="M9 12h2013v786h-2013z" fill="#6b93c4" />
            <path d="M9 12h276v50l-276 30z" fill="#6596bd" />
            <path d="M9 60l150-8 126-12v110l-276 22z" fill="#649fe8" />
            <path d="M9 170l276-22v60l-43 68-105-72-128 6z" fill="#6095f6" />
            <path d="M9 215l128-8 105 69 43-60v180l-28-40-245-10z" fill="#6588c6" />
            <path d="M9 240l90 10 70 80 60 40 60 70v60l-60-90-220-70z" fill="#5e78b0" />
            <path d="M50 255h50l16 30-4 50-30 20-50-20-10-40z" fill="#66709c" />
            <path d="M340 12h465v120l-90-50-150-30-225 10z" fill="#6494bd" />
            <path d="M340 62l180-16 180 26 110 48 240 88v120l-240-108-90-45-170-37-210 10z" fill="#669fe9" />
            <path d="M340 130l60-26 110-2 170 30 125 70v96l-120-50-100-60-190-24-55 26z" fill="#6d99de" />
            <path d="M340 160l50-4 200 20 110 64 100 54h-460z" fill="#6f97c6" />
            <path d="M405 145h68v80h-68zM482 155h84v90h-84zM626 155h50v80h-50z" fill="#668dba" />
            <path d="M500 228l100-35 30 60-20 33-95-10z" fill="#7184ae" />
            <path d="M340 290l465 12v52l-465-8z" fill="#82a6d5" />
            <path d="M340 358l460 10-8 180h-452z" fill="#6890c0" />
            <path d="M626 385h60v130h-60zM736 380h52v150h-52z" fill="#5f83b4" />
            <path d="M285 12h55v528h-55z" fill="#82a6d5" /><path d="M285 12h53v190l-53 80z" fill="#80abf4" />
            <path d="M805 12h80v650h-80z" fill="#82a6d5" /><path d="M808 112l76 32-8 190-60-50z" fill="#80abf4" />
            <path d="M885 12h260v150l-260-80z" fill="#7ba0d0" /><path d="M888 15h160v60h-160z" fill="#7187b3" />
            <path d="M885 80l160 22v100l-160-20z" fill="#6c95c4" />
            <path d="M883 155l140 50 230 130 90 120 170 170 140 175h-170l-260-260-140-90-200-100z" fill="#669ee6" />
            <path d="M883 250l200 80 160 110 20 100-200-50-120 60-60-150z" fill="#6c99e2" />
            <path d="M912 340l60 80 150 50 190 110 60 80-230-60-110-60-80-20-40-80z" fill="#6f9be3" />
            <path d="M1262 400l36-10 37 50-30 100-22 110-38-25-40-65 20-70z" fill="#80abf4" />
            <path d="M1345 500l150 160 130 138h-60l-210-200-30-60z" fill="#80abf4" />
            <path d="M856 540l140 10 190 30 10 218h-200z" fill="#6d95c6" />
            <path d="M285 430l170-25 55 25 80 5 35 56 30 45 200 20 50 20 60 100 60 130h-300l-440-200z" fill="#6b7eac" />
            <path d="M650 540l190 12 50 20 20 70-60 0-80-10z" fill="#8093bb" /><path d="M285 440l55-10v110h-55z" fill="#8093bb" />
            <path d="M576 455h46v58h-46z" fill="#5f73a4" />
            <path d="M1055 540l90-2 40 40-96 74 110 40-30 70-114 5z" fill="#6c95c6" />
            <path d="M1205 580l40 45 45 10 70 20 100 60 60 100h-330z" fill="#7ea3d8" />
            <path d="M1090 650l110-75-40 110z" fill="#6894e6" />
            <path d="M1050 585h110v140h-110z" fill="#658dc0" /><path d="M1300 690h60l90 40-20 40h-120z" fill="#658dc0" />

            {/* right bank */}
            <path d="M1390 12h240l60 200 0 90h-300z" fill="#7a96c2" />
            <path d="M1170 12h170v160l-170-60z" fill="#82a3cf" />
            <path d="M1420 15h200v70l-200 20z" fill="#7488b4" />
            <path d="M1405 142l200-20h60v250l-260-30z" fill="#6a90c2" />
            <path d="M1590 125l80-30 0 60 50 52 145 23 60 67-80 15-228 10-5-160z" fill="#7084b0" />
            <path d="M1430 165l50-32 140 30v150l155 22v117l-440-70v-160z" fill="#678fbe" />
            <path d="M1360 190l85 22-22 75-68 10z" fill="#7186b2" />
            <path d="M1355 400l430 30 80 120-20 130-430-60-60-120z" fill="#6d98c9" />
            <path d="M1775 330l75-30h170v150l-65 103h-68l-60-110-52 0z" fill="#6778a3" />
            <path d="M1430 520l50-60 110 88 150 2 28 56-60 102-190-60z" fill="#6c98e2" />
            <path d="M1520 600l350-40 150-10v248h-370z" fill="#6b93c4" />
            <path d="M1650 798l150-80 142-68 80 40v108z" fill="#6894dd" />
            <path d="M1550 450l45-20 30 60-40 15z" fill="#6084b2" />
            <path d="M1180 165h60v70h-60zM1090 120h80v60h-80z" fill="#6287b9" />

            {/* parcel and contour outlines */}
            <g fill="none" stroke="#4f7396" strokeWidth="2.500">
                <path d="M9 88l276-38M9 172l276-24M340 60l180-16 180 26 105 45M340 130l100-24 80-4 170 40 115 66M340 290l462 8M395 120v160M578 118v170M692 140v150M345 358l460 10M345 358l-8 180M403 362l-6 176M460 365l-6 115M516 366l-6 154M573 368l-6 160M628 370l-4 168M708 372l-6 176M885 75v-60M885 155v700M885 75l160 5M885 250l150 80 160 110M885 340l180 60 160 130M1055 420l-30 340M1055 578h160M1215 540l-10 150-80 70h-100M1340 450l200 200M1320 570l90 2M1310 480l-30 310M1590 120v490M1405 142l-20 170M1405 142l265-20M1665 500v85M1570 615l300-40-10 210M1570 615l75 150M1350 380l120 155 200-20M1850 440l-10 125-250 35M1775 300h160M1060 230l200 160M1020 250v90M1420 60h120M1420 15v45" />
            </g>
            <g fill="none" stroke="#a39c93" strokeWidth="2.500">
                <path d="M9 45l200 12 70-15M360 12l60 30h300l20-30M137 207l105 69 43-65 60-35 55-18 190 18 110 64 100 70 70 30M9 210l128-3M160 280l15 55 60 35 60 68 160-33 55 25 80 5 35 56 30 45 200 20 50 20 60 100 100 110M740 90l30-60M500 228l100-35 30 60-20 33-95-10zM800 110l260 75 160 130M912 340v70l120 120M1240 190h110M1365 190l80 22-22 75-68 10M1430 165l50-32 140 30v150l155 22v100l50 10 62 115h68l65-110M1440 500l30-40 120 88 150 2 28 56-60 102-150-55M1650 798l150-80 142-68 80 40M1055 540l60-2 40 46-70 68 95 38 30-130 40 80 80 20 100 62-25 60M1200 50l60 60 10 60" />
            </g>
            <path d="M832 85l44-25 10 50z" fill="#8493ba" stroke="#a39c93" strokeWidth="2.500" />
        </g>

        {/* road labels */}
        <g fill="#5c5c5c">
            <text x="484" y="47" fontSize="36" fill="#70782f">Riverwalk Park</text>
            <text x="512" y="780" fontSize="42" transform="rotate(1 512 780)">Aurora Ave</text>
            <text transform="translate(292 656) rotate(-88)" fontSize="40" stroke="#fff" strokeOpacity=".5" strokeWidth="4" paintOrder="stroke">S Webster St</text>
            <text transform="translate(1556 82) rotate(-5)" fontSize="43">E Chicago Ave</text>
        </g>

        {/* levee */}
        <path d="M1380 12l-55 210-8 100 16 90 18 60 104 125 30 15" fill="none" stroke="#6fa01c" strokeWidth="20" />
        <path d="M1372 12l-12 60M1362 490l86 80 15 34 30 8" fill="none" stroke="#2a7308" strokeWidth="20" />
        <path d="M1475 602l30 20 110 120 30 56" fill="none" stroke="#c9f28b" strokeWidth="14" />
        <path d="M1510 650l90 90 30 58" fill="none" stroke="#8fce62" strokeWidth="10" />

        {/* sewer lines */}
        <g fill="none" stroke="#ff5500">
            <path strokeWidth="13" d="M9 227l104 3 123 98 240 13 308 8M805 386h234l156 114 54-126 75 4M948 94l199 28 190 25M1352 347l317 33 3 80 147-12-9-144 65-84M1381 106l291-14M1396 494l117 126 125 178M1396 12l-15 94" />
            <path strokeWidth="20" d="M1352 12l-12 138-14 180 14 60 14 58 42 46" />
            <path strokeWidth="9" d="M170 276l-108 134M355 230l-5 100M531 200v140M633 225l-2 110M760 242v105M375 335v60M430 340v50M486 345v50M547 345v50M600 347v60M664 350v70M770 370l-5 55M1008 627l-16 171M960 94l-12 90M992 96l-14 100M1055 108l-8 78M1090 115l-10 80M1129 120l-10 100M1175 130l-8 110M1218 135l-10 110M1256 140l-5 100M1287 213l30 10M1278 315l30 14M1567 376l-22 125M1167 630l-2 168M1362 675l-78 60-35 60M815 790h370M1606 12v78" />
        </g>
        {MANHOLES.map(([x, y], i) => (
            <g key={i} transform={`translate(${x} ${y})`} stroke="#000">
                <circle r="24" fill="#ff5500" strokeWidth="3.500" />
                <path d="M-24 0h48M0 -24v48M-17 -17l34 34M17 -17l-34 34" strokeWidth="2.500" />
                <circle r="13" fill="#ff5500" strokeWidth="3" /><circle r="8" fill="#fff" stroke="none" />
            </g>
        ))}
        {DOTS.map(([x, y], i) => (
            <g key={i}><circle cx={x} cy={y} r="16" fill="#ff5500" /><circle cx={x} cy={y} r="11" fill="#000" /></g>
        ))}
        <path d="M1470 12h70l-10 6h-55z" fill="#ff5500" stroke="#fff" strokeWidth="3" />
        <Facility x={108} y={30} letter="S" />
        <Facility x={363} y={201} letter="S" />
        <Facility x={775} y={277} letter="P" />

        <g fill="#5c5c5c">
            <text transform="translate(502 326) rotate(2)" fontSize="37">Water St</text>
            <text transform="translate(832 474) rotate(-88)" fontSize="38">S Main St</text>
            <text transform="translate(960 106) rotate(1)" fontSize="39">W Chicago Ave</text>
            <g fill="#8d4878" fontSize="35">
                <text x="305" y="212">Offices</text><text x="70" y="416">Municipal</text><text x="90" y="461">Center</text>
            </g>
        </g>
        <path d="M9 308L95 380l137 25 58 80v52l52 3 113-62 57 42 128 20 100 103 110-6 152 160M1608 12l64 83-2 60 50 52 145 23 67 67 51 21v74l42 14" fill="none" stroke="#00ffff" strokeWidth="10" />
    </svg>
);

/* ---------- panels ---------- */

const PanelTitle = ({ children }) => (
    <div className="flex h-[21px] shrink-0 items-center bg-gradient-to-r from-[#bfcfdf] to-[#d6e4f1] pl-0.5">
        <h2 className="flex-1">{children}</h2>
        <button type="button" aria-label="Auto hide"><Icon name="pin" className="size-3.5" /></button>
        <button type="button" aria-label="Close" className="ml-0.5 mr-px"><Icon name="close" className="size-3.5" /></button>
    </div>
);

const Toggle = ({ sign }) => (
    <button type="button" aria-label="Toggle" className="flex size-[9px] shrink-0 items-center justify-center border border-[#919191] bg-white">
        <svg viewBox="0 0 5 5" className="size-[5px]"><path d={sign === '+' ? 'M0 2.500h5M2.500 0v5' : 'M0 2.500h5'} stroke="#3c4f8a" /></svg>
    </button>
);

const TocGroup = ({ children }) => (
    <div className="flex h-[25px] shrink-0 items-center gap-[9px] border-b-2 border-[#7ea6de] bg-[#bdd9fb] pl-[3px]">
        <Toggle sign="-" /><span className="whitespace-nowrap">{children}</span>
    </div>
);

const TocRow = ({ icon, name, count = '0', offIcon = 'selOffGrey', className }) => (
    <div className={clsx('flex h-[19px] shrink-0 items-center', className)}>
        <Icon name={icon} />
        <span className="ml-[3px] w-[96px] whitespace-nowrap">{name}</span>
        {name && <><Icon name="selOn" className="size-[13px]" /><Icon name={offIcon} className="ml-[5px] size-[13px]" /><span className="ml-1">{count}</span></>}
    </div>
);

const TableOfContents = () => (
    <aside className="flex w-[197px] shrink-0 flex-col bg-white">
        <PanelTitle>Table Of Contents</PanelTitle>
        <div className="flex h-[26px] shrink-0 items-center border-b border-[#aaa] bg-[#fafafa] pl-0.5">
            <Tool icon="drawOrder" /><Tool icon="bySource" /><Tool icon="byVisible" /><Tool icon="bySelection" on /><Sep /><Tool icon="list" />
        </div>
        <div className="flex min-h-0 flex-1">
            <div className="flex min-w-0 flex-1 flex-col overflow-hidden">
                <TocGroup>Selected</TocGroup>
                <TocRow icon="polys" name="Flood Impact A..." count="1" offIcon="selOff" className="bg-[#f0f0f0]" />
                <div className="flex h-[19px] shrink-0 items-center pl-[33px] text-[#0000e6]">Flood Level</div>
                <div className="flex h-[19px] shrink-0 items-center gap-0.5 pl-4 text-[#0000e6]"><span className="h-[11px] w-[15px] border border-[#aaa] bg-[#8195bd]" />10</div>
                <div className="flex h-[19px] shrink-0 items-center gap-0.5 pl-8 text-[#5b82c0]"><Icon name="cyanCell" />Flood Level 10</div>
                <TocGroup>Selectable (no features selec...</TocGroup>
                {LAYERS.map((layer, i) => (
                    <TocRow key={i} icon={layer.icon} name={layer.name} className={layer.dim && 'text-[#777]'} />
                ))}
            </div>
            <div className="flex w-4 shrink-0 flex-col items-center bg-[#f0f0f0]">
                <div className="flex h-[17px] items-center"><Chevron dir="up" /></div>
                <div className="w-full flex-1 bg-[#cdcdcd]" />
                <div className="flex h-[17px] items-center"><Chevron /></div>
            </div>
        </div>
    </aside>
);

const Catalog = () => (
    <aside className="flex min-w-0 flex-1 flex-col">
        <PanelTitle>Catalog</PanelTitle>
        <div className="flex h-[24px] shrink-0 items-center bg-gradient-to-b from-white to-[#f2f2f2] pl-[3px]">
            <Tool icon="backGold" /><Drop className="mx-0.5" /><Tool icon="fwdPlain" /><Tool icon="upLevel" /><Tool icon="home" /><Tool icon="gdbHome" /><Sep /><div className="w-1" />
            <Tool icon="gridView" /><Drop className="mx-1 text-[#777]" /><Sep /><div className="w-1" /><Tool icon="folderAdd" /><Sep /><div className="w-0.5" /><Tool icon="treeView" /><Sep /><div className="w-0.5" /><Tool icon="list" />
        </div>
        <div className="flex h-[25px] shrink-0 items-center pl-0.5 pr-[3px] text-[10px]">
            <label htmlFor="location">Location:</label>
            <div className="ml-auto flex h-[22px] w-[243px] items-center border border-[#7a7a7a] bg-white pl-[3px]">
                <Icon name="folderHome" />
                <select id="location" className="ml-1 min-w-0 flex-1 appearance-none overflow-hidden whitespace-nowrap bg-transparent"><option>Home - Flood Planning EM Example\Mapsa</option></select>
                <Chevron className="mx-1 text-[#444]" />
            </div>
        </div>
        <ul className="ml-px mr-1 flex-1 overflow-hidden border-l border-t border-[#7a7a7a] bg-white pt-px">
            {TREE.map((node, i) => (
                <li key={i} className={clsx('flex h-[17px] items-center whitespace-nowrap', INDENT[node.depth])}>
                    {node.toggle ? <Toggle sign={node.toggle} /> : <span className="w-[9px] shrink-0" />}
                    <Icon name={node.icon} className="ml-[7px] size-4" />
                    <span className={clsx('ml-1 flex-1', node.bold && 'font-bold', node.active && 'bg-[#f0f0f0]')}>{node.name}</span>
                </li>
            ))}
        </ul>
        <div className="flex h-[30px] shrink-0 items-start bg-white pl-0.5">
            <button type="button" className="flex h-[28px] items-end gap-0.5 rounded-b border border-[#888] bg-white px-[5px]"><Icon name="catWin" />Catalog</button>
            <button type="button" className="flex h-[28px] items-end gap-0.5 rounded-b border border-[#888] bg-[#f0f0f0] px-[5px] text-[#777]"><Icon name="searchWin" />Search</button>
        </div>
    </aside>
);

/* ---------- attribute table ---------- */

const COLUMNS = [
    { label: 'Flood Area Name', width: 'w-[119px]', value: r => r.name },
    { label: 'Description', width: 'w-[91px]', value: r => r.desc },
    { label: 'Population Affected', width: 'w-[147px]', value: r => r.pop, right: true },
    { label: 'Last Update Date', width: 'w-[126px]', value: () => '3/19/2012' },
    { label: 'Last Editor', width: 'w-[91px]', value: () => 'Esri' },
    { label: 'Category', width: 'w-[98px]', value: () => 'Meteorological' },
    { label: 'Incident Type', width: 'w-[154px]', value: () => 'Meteorological - Flood' },
    { label: 'Hyperlink Column', width: 'w-[126px]', value: r => r.link },
    { label: 'SHAPE *', width: 'w-[63px]', value: () => 'Polygon' },
    { label: 'SHAPE_Length', width: 'w-[98px]', value: r => r.length, right: true },
    { label: 'SHAPE_A', value: r => r.area, right: true, cut: true },
];

const AttributeTable = () => (
    <table className="w-full table-fixed border-separate border-spacing-0 font-['Liberation_Sans',Arial,sans-serif] text-[11px]">
        <thead>
            <tr className="h-[17px]">
                <th className="w-[14px] border-b-2 border-r border-black bg-[#f0f0f0] p-0" />
                {COLUMNS.map(col => (
                    <th key={col.label} className={clsx('overflow-hidden whitespace-nowrap border-b-2 border-black bg-[#f0f0f0] p-0 leading-[15px] shadow-[inset_1px_1px_0_#fff]', col.width, col.cut ? 'text-right' : 'border-r-2 text-center')}>{col.label}</th>
                ))}
            </tr>
        </thead>
        <tbody>
            {FLOOD_ROWS.map(row => (
                <tr key={row.name} className={clsx('h-4', row.selected ? 'bg-[#aaffff]' : 'bg-white')}>
                    <th scope="row" className="border-b border-r border-black bg-[#f0f0f0] p-0">
                        {row.selected && <svg viewBox="0 0 8 8" className="mx-auto block size-2"><path d="M2 0v8l4-4z" /></svg>}
                    </th>
                    {COLUMNS.map(col => (
                        <td key={col.label} className={clsx('overflow-hidden whitespace-nowrap border-b border-[#6e6e6e] p-0 leading-[15px]', col.right && 'text-right', col.cut ? 'pl-0' : 'border-r px-0.5')}>{col.value(row)}</td>
                    ))}
                </tr>
            ))}
        </tbody>
    </table>
);

const TableWindow = () => (
    <section className="absolute bottom-9 left-3 right-0 top-[371px] flex flex-col border-b-2 border-black bg-[#f0f0f0]">
        <h2 className="mt-[3px] flex h-[19px] shrink-0 items-center bg-gradient-to-r from-[#9ab3d1] to-[#b5cde9] pl-1">Table</h2>
        <div className="mt-0.5 flex h-[26px] shrink-0 items-center bg-gradient-to-b from-white to-[#f0f0f0] pl-1">
            <Tool icon="list" /><Drop /><Sep /><div className="w-1" /><Tool icon="related" /><Drop /><Sep />
            <Tool icon="selAttr" /><Tool icon="switchSel" /><Tool icon="clearSel" /><Tool icon="zoomSel" /><Tool icon="del" />
        </div>
        <h3 className="flex h-[21px] shrink-0 items-center bg-gradient-to-r from-[#bccbdc] to-[#d5e3f0] pl-1">Flood Impact Areas</h3>
        <div className="ml-[3px] flex min-h-0 flex-1 flex-col border-l-2 border-t-4 border-[#757575]">
            <div className="min-h-0 flex-1 overflow-hidden"><AttributeTable /></div>
            <div className="flex h-[17px] shrink-0 items-center border-t border-white pl-0.5">
                <Chevron dir="left" /><div className="ml-[330px] h-full flex-1 bg-[#cdcdcd]" />
            </div>
            <div className="flex h-7 shrink-0 items-center border-b border-t border-[#e0e0e0] bg-gradient-to-b from-white to-[#efefef] pl-0.5">
                <Tool icon="navFirst" /><Tool icon="navPrev" />
                <input aria-label="Record" defaultValue="1" className="h-5 w-[58px] bg-white pr-1 text-right" />
                <Tool icon="navNext" /><Tool icon="navLast" /><Sep /><Tool icon="allRecords" on /><Tool icon="selRecords" /><Sep />
                <span className="ml-1">(1 out of 6 Selected)</span>
            </div>
        </div>
        <div className="flex h-[22px] shrink-0 items-start bg-gradient-to-r from-[#f0f0f0] to-[#fafafa] pl-0.5">
            <button type="button" className="h-5 rounded-b border border-t-0 border-[#8a8a8a] bg-white px-[6px]">Flood Impact Areas</button>
        </div>
    </section>
);

/* ---------- application ---------- */

const MENUS = ['File', 'Edit', 'View', 'Bookmarks', 'Insert', 'Selection', 'Geoprocessing', 'Customize', 'Windows', 'Help'];

export default function App() {
    return (
        <div className="relative flex h-screen w-full overflow-hidden bg-[#24344b] font-['Open_Sans','Noto_Sans',sans-serif] text-[11px] leading-4 text-[#101010]">
            <div className="mb-0.5 flex min-w-0 flex-1 flex-col overflow-hidden border-b border-r border-[#0078d7] bg-[#f0f0f0]">
                <header className="flex h-[30px] shrink-0 items-center bg-white pl-1.5">
                    <Icon name="arcmap" />
                    <h1 className="ml-[5px] flex-1">FloodPlanning.mxd - ArcMap</h1>
                    <button type="button" aria-label="Minimize" className="flex w-[46px] justify-center"><svg viewBox="0 0 10 10" className="size-2.5"><path d="M0 5.500h10" stroke="#000" /></svg></button>
                    <button type="button" aria-label="Maximize" className="flex w-[46px] justify-center"><svg viewBox="0 0 10 10" className="size-2.5"><path d="M.5 .5h9v9h-9z" fill="none" stroke="#000" /></svg></button>
                    <button type="button" aria-label="Close" className="flex w-[46px] justify-center"><svg viewBox="0 0 10 10" className="size-2.5"><path d="M0 0l10 10M10 0l-10 10" stroke="#000" /></svg></button>
                </header>
                <nav className="flex h-[26px] shrink-0 items-center gap-[17px] bg-gradient-to-r from-[#f0f0f0] to-[#fafafa] pl-2.5">
                    {MENUS.map(m => <button key={m} type="button">{m}</button>)}
                    <Icon name="menuArrow" className="-ml-1.5 size-4" />
                </nav>

                <div className="flex h-[26px] shrink-0 bg-[#f4f4f4]">
                    <Bar className="w-[562px]">
                        <Grip /><Tool icon="newDoc" /><Tool icon="open" /><Tool icon="save" /><Tool icon="print" /><Sep />
                        <Tool icon="cut" /><Tool icon="copy" /><Tool icon="paste" /><Tool icon="del" /><Sep /><Tool icon="undo" /><Tool icon="redo" /><Sep />
                        <Tool icon="addData" /><Drop /><Sep />
                        <div className="ml-[3px] flex h-[21px] w-[148px] shrink-0 items-center border border-[#7a7a7a] bg-white font-['Liberation_Sans',Arial,sans-serif]">
                            <select aria-label="Map scale" className="min-w-0 flex-1 appearance-none bg-transparent pl-0.5"><option>1:3,000</option></select>
                            <Chevron className="mr-[3px] text-[#444]" />
                        </div>
                        <Sep /><Tool icon="sketch" on /><Sep /><Tool icon="tocWin" /><Tool icon="catWin" /><Tool icon="searchWin" /><More />
                    </Bar>
                    <Bar className="w-[104px]"><Grip /><MenuButton>3D Analyst</MenuButton><More /></Bar>
                    <Bar className="w-[381px]">
                        <Grip /><Tool icon="ddp" /><Tool icon="ddpRefresh" /><Tool icon="greyTable" /><Sep /><Tool icon="first" /><Tool icon="prev" />
                        <div className="flex h-[21px] w-[126px] shrink-0 items-center border border-[#c3c3c3] bg-white px-px font-['Liberation_Sans',Arial,sans-serif]">
                            <input aria-label="Page" defaultValue="Show Name" className="h-3.5 w-[61px] bg-[#3399ff] text-[#58708c]" />
                            <span className="h-3.5 flex-1 bg-[#f0f0f0]" />
                            <Chevron className="mx-1 text-[#999]" />
                        </div>
                        <Tool icon="next" /><Tool icon="last" /><Sep /><MenuButton>Page Text</MenuButton><More full={false} />
                    </Bar>
                    <Bar className="flex-1"><Grip /><MenuButton>Animation</MenuButton><Sep /><Tool icon="camera" /><Sep /><Tool icon="animWin" /><More full={false} /></Bar>
                </div>
                <div className="flex h-[26px] shrink-0 bg-[#f4f4f4]">
                    <Bar className="w-[388px]">
                        <Grip /><Tool icon="zoomIn" /><Tool icon="zoomOut" /><Tool icon="pan" /><Tool icon="globe" /><div className="w-1.5" />
                        <Tool icon="fixedIn" /><Tool icon="fixedOut" /><Sep /><Tool icon="backGrey" /><Tool icon="fwdGrey" /><Sep />
                        <Tool icon="selectFeat" /><Drop /><div className="w-1" /><Tool icon="clearSel" /><Sep /><Tool icon="pointer" /><Sep />
                        <Tool icon="info" /><Tool icon="bolt" /><Tool icon="popup" /><More />
                    </Bar>
                    <Bar className="w-[238px]">
                        <Grip /><MenuButton>Data Reviewer</MenuButton><Sep /><Tool icon="checkDisc" /><Tool icon="winTable" /><Tool icon="winSel" /><Tool icon="infoDisc" /><Sep /><Tool icon="winCheck" /><More />
                    </Bar>
                    <Bar className="w-[421px]">
                        <Grip /><MenuButton>Editor</MenuButton><Sep /><Tool icon="editArrow" /><Tool icon="editNote" /><Sep /><Tool icon="seg" /><Tool icon="arc" /><Tool icon="trace" /><Drop className="text-[#999]" /><Tool icon="burst" /><Sep />
                        <Tool icon="vertices" /><Tool icon="reshape" /><Tool icon="cutPoly" /><Tool icon="split" /><Tool icon="rotate" /><Sep /><Tool icon="attrs" /><Tool icon="sketchProps" /><Sep /><Tool icon="createFeat" /><More full={false} />
                    </Bar>
                    <Bar className="flex-1">
                        <Grip /><Tool icon="globeSync" /><Tool icon="globeSyncGrey" />
                        <div className="flex h-[21px] w-[55px] shrink-0 items-center border border-[#7a7a7a] bg-white px-px font-['Liberation_Sans',Arial,sans-serif]">
                            <input aria-label="Transparency" defaultValue="0" className="h-3.5 w-2 bg-[#3399ff] text-white" />
                            <Chevron className="ml-auto mr-0.5 text-[#444]" />
                        </div>
                        <Sep /><Tool icon="flag" /><More full={false} />
                    </Bar>
                </div>

                <main className="flex min-h-0 flex-1">
                    <TableOfContents />
                    <div className="ml-[5px] flex w-[688px] shrink-0 flex-col border-l border-t border-[#6e6e6e]">
                        <div className="flex min-h-0 flex-1 overflow-hidden">
                            <FloodMap />
                            <div className="flex flex-1 justify-center border-l border-white pt-1"><Chevron dir="up" /></div>
                        </div>
                        <div className="flex h-[18px] shrink-0 items-start pl-0.5">
                            <span className="bg-[#cbe4fb] px-px"><Icon name="dataView" className="size-3" /></span><Icon name="layoutView" className="ml-1 size-3" /><Sep />
                            <Icon name="refresh" className="ml-1 size-3" /><Icon name="pause" className="ml-1 size-3" />
                            <div className="ml-4 flex h-full min-w-0 flex-1 items-center pr-5">
                                <Chevron dir="left" /><div className="ml-[240px] h-full w-[17px] bg-[#cdcdcd]" /><Chevron dir="right" className="ml-auto text-[#555]" />
                            </div>
                        </div>
                    </div>
                    <div className="w-1.5 shrink-0" />
                    <Catalog />
                </main>

                <footer className="flex h-[21px] shrink-0 items-center justify-end gap-1 bg-[#f0f0f0] pr-1">
                    <div className="h-[18px] w-4 border border-[#fafafa]" />
                    <output className="flex h-[18px] w-[259px] items-center whitespace-pre border border-[#fafafa] pl-[3px]">{'1034810.032  1858786.839 Feet'}</output>
                    <svg viewBox="0 0 9 9" className="mt-1.5 size-[9px]"><path d="M6 0h2v2h-2zM3 3h2v2h-2zM6 3h2v2h-2zM0 6h2v2h-2zM3 6h2v2h-2zM6 6h2v2h-2z" fill="#b5b5b5" /></svg>
                </footer>
            </div>
            <div className="w-[5px] shrink-0 overflow-hidden pl-0.5 pt-[88px] text-white">P</div>
            <TableWindow />
        </div>
    );
}
